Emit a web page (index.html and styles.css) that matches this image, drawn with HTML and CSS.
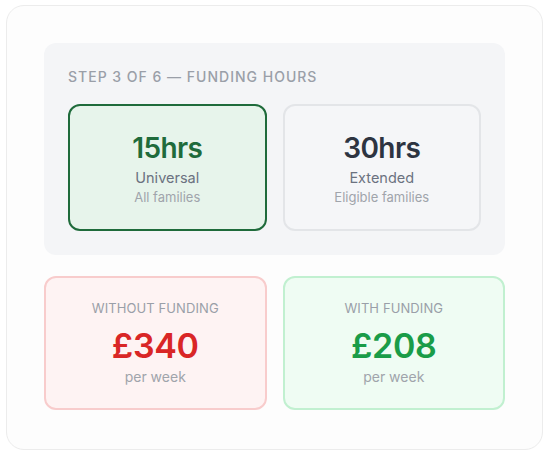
FILE: index.html
```html
<!DOCTYPE html>
<html>
<head>
<meta charset="utf-8">
<link rel="stylesheet" href="styles.css">
</head>
<body>
<div class="card">
  <section class="panel">
    <h2 class="step">STEP 3 OF 6 — FUNDING HOURS</h2>
    <div class="options">
      <div class="option selected">
        <div class="hrs">15hrs</div>
        <div class="name">Universal</div>
        <div class="sub">All families</div>
      </div>
      <div class="option">
        <div class="hrs">30hrs</div>
        <div class="name">Extended</div>
        <div class="sub">Eligible families</div>
      </div>
    </div>
  </section>
  <div class="costs">
    <div class="cost without">
      <div class="label">WITHOUT FUNDING</div>
      <div class="amount">£340</div>
      <div class="per">per week</div>
    </div>
    <div class="cost with">
      <div class="label">WITH FUNDING</div>
      <div class="amount">£208</div>
      <div class="per">per week</div>
    </div>
  </div>
</div>
</body>
</html>
```
FILE: styles.css
```css
* { box-sizing: border-box; }
html, body { margin: 0; background: #ffffff; }
body {
  padding: 5px 7px 5px 6px;
  font-family: Inter, "Noto Sans", sans-serif;
}
.card {
  border: 1px solid #ececec;
  border-radius: 18px;
  background: #fdfdfd;
  padding: 37px 37px 39px 37px;
}
.panel {
  background: #f4f5f7;
  border-radius: 12px;
  padding: 26px 24px 24px;
}
.step {
  margin: 0 0 19px;
  font-size: 14px;
  line-height: 16px;
  font-weight: 500;
  letter-spacing: 1px;
  color: #9a9fa8;
}
.options {
  display: grid;
  grid-template-columns: 1fr 1fr;
  gap: 16px;
}
.option {
  height: 127px;
  border: 2px solid #e3e5e8;
  border-radius: 12px;
  background: #f5f6f8;
  display: flex;
  flex-direction: column;
  align-items: center;
  padding-top: 25px;
}
.option.selected {
  border-color: #1f6b3b;
  background: #e7f4eb;
}
.hrs {
  font-size: 28px;
  line-height: 34px;
  font-weight: 600;
  color: #2d3441;
  letter-spacing: -0.6px;
}
.selected .hrs { color: #1f6b3b; }
.name {
  margin-top: 3px;
  font-size: 14.5px;
  line-height: 20px;
  color: #6b7280;
}
.sub {
  font-size: 13px;
  line-height: 18px;
  color: #a0a4ab;
}
.costs {
  margin-top: 21px;
  display: grid;
  grid-template-columns: 1fr 1fr;
  gap: 16px;
}
.cost {
  height: 134px;
  border: 2px solid;
  border-radius: 12px;
  display: flex;
  flex-direction: column;
  align-items: center;
  padding-top: 21px;
}
.cost.without { border-color: #f8cccc; background: #fef3f3; }
.cost.with { border-color: #c1f0d0; background: #effcf3; }
.label {
  font-size: 13px;
  line-height: 18px;
  letter-spacing: 0.1px;
  color: #9a9fa8;
}
.amount {
  margin-top: 9px;
  font-size: 34px;
  line-height: 40px;
  font-weight: 600;
  letter-spacing: -0.3px;
}
.without .amount { color: #d92626; }
.with .amount { color: #1a9c48; }
.per {
  margin-top: 2px;
  font-size: 14px;
  line-height: 18px;
  color: #a0a4ab;
}
```
